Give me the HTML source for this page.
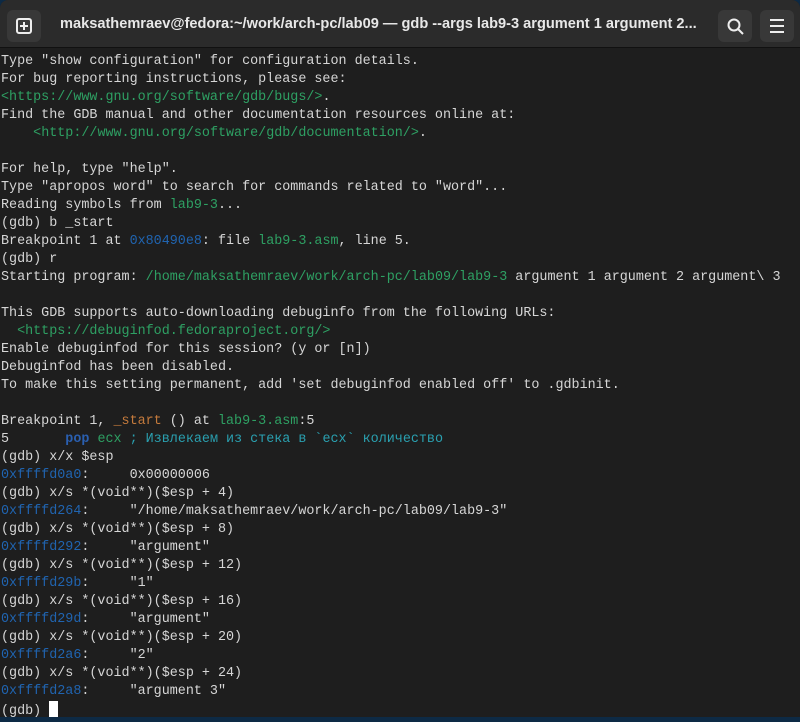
<!DOCTYPE html>
<html><head><meta charset="utf-8"><style>
body{margin:0;width:800px;height:722px;background:#0d2a45;overflow:hidden;position:relative}
.win{position:absolute;left:0;top:0;width:800px;height:717px;background:#1e1e1e;border-radius:8px 8px 0 0;overflow:hidden}
.hdr{height:47px;background:#2b2b2b;border-bottom:1px solid #111;position:relative}
.btn{position:absolute;top:10px;width:34px;height:32px;background:#383838;border-radius:6px;}
.title{position:absolute;left:60px;top:16px;font:bold 14.6px "Liberation Sans",sans-serif;color:#e8e8e8;white-space:nowrap;width:645px;overflow:hidden}
pre{margin:0;position:absolute;left:1px;top:53px;font:13.4px/18px "Liberation Mono",monospace;color:#d6d6d6}
.g{color:#2ea063}.b{color:#2064b0}.o{color:#c47a3c}.c{color:#2aa0b0}.k{color:#2a5fb0;font-weight:bold}
.cur{display:inline-block;width:9px;height:17px;background:#fff;vertical-align:-4px}
</style></head><body>
<div class="win">
<div class="hdr">
<div class="btn" style="left:7px"><svg width="34" height="32"><rect x="10" y="9" width="14" height="14" rx="2" fill="none" stroke="#eee" stroke-width="2"/><path d="M17 12v8M13 16h8" stroke="#eee" stroke-width="2"/></svg></div>
<div class="title">maksathemraev@fedora:~/work/arch-pc/lab09 — gdb --args lab9-3 argument 1 argument 2...</div>
<div class="btn" style="left:718px"><svg width="34" height="32"><circle cx="16" cy="15" r="5.5" fill="none" stroke="#eee" stroke-width="2"/><path d="M20 19l5 5" stroke="#eee" stroke-width="2"/></svg></div>
<div class="btn" style="left:760px"><svg width="34" height="32"><path d="M10 10h14M10 16h14M10 22h14" stroke="#eee" stroke-width="2"/></svg></div>
</div>
<pre>Type "show configuration" for configuration details.
For bug reporting instructions, please see:
<span class="g">&lt;https://www.gnu.org/software/gdb/bugs/&gt;</span>.
Find the GDB manual and other documentation resources online at:
    <span class="g">&lt;http://www.gnu.org/software/gdb/documentation/&gt;</span>.

For help, type "help".
Type "apropos word" to search for commands related to "word"...
Reading symbols from <span class="g">lab9-3</span>...
(gdb) b _start
Breakpoint 1 at <span class="b">0x80490e8</span>: file <span class="g">lab9-3.asm</span>, line 5.
(gdb) r
Starting program: <span class="g">/home/maksathemraev/work/arch-pc/lab09/lab9-3</span> argument 1 argument 2 argument\ 3

This GDB supports auto-downloading debuginfo from the following URLs:
  <span class="g">&lt;https://debuginfod.fedoraproject.org/&gt;</span>
Enable debuginfod for this session? (y or [n])
Debuginfod has been disabled.
To make this setting permanent, add 'set debuginfod enabled off' to .gdbinit.

Breakpoint 1, <span class="o">_start</span> () at <span class="g">lab9-3.asm</span>:5
5       <span class="k">pop</span> <span class="g">ecx</span> <span class="c">; Извлекаем из стека в `ecx` количество</span>
(gdb) x/x $esp
<span class="b">0xffffd0a0</span>:     0x00000006
(gdb) x/s *(void**)($esp + 4)
<span class="b">0xffffd264</span>:     "/home/maksathemraev/work/arch-pc/lab09/lab9-3"
(gdb) x/s *(void**)($esp + 8)
<span class="b">0xffffd292</span>:     "argument"
(gdb) x/s *(void**)($esp + 12)
<span class="b">0xffffd29b</span>:     "1"
(gdb) x/s *(void**)($esp + 16)
<span class="b">0xffffd29d</span>:     "argument"
(gdb) x/s *(void**)($esp + 20)
<span class="b">0xffffd2a6</span>:     "2"
(gdb) x/s *(void**)($esp + 24)
<span class="b">0xffffd2a8</span>:     "argument 3"
(gdb) <span class="cur"></span></pre>
</div>
</body></html>
